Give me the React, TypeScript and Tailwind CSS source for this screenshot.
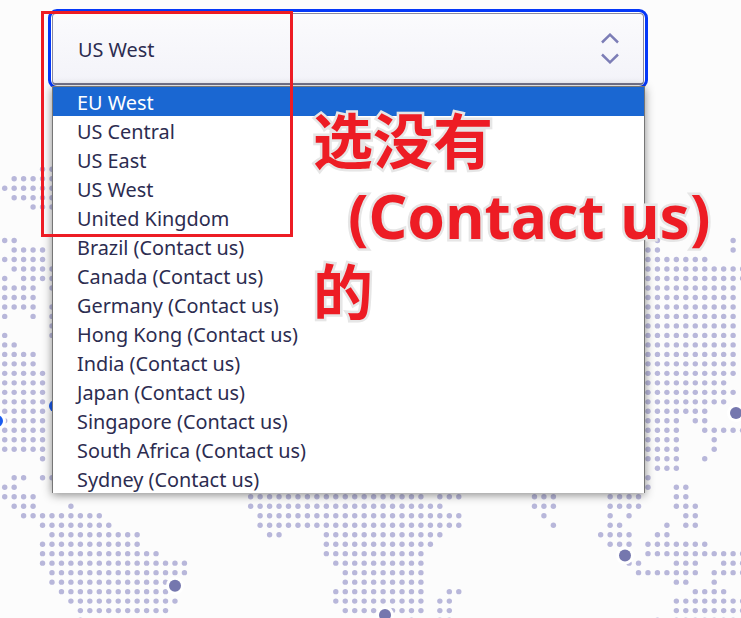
const regions = [
  'EU West',
  'US Central',
  'US East',
  'US West',
  'United Kingdom',
  'Brazil (Contact us)',
  'Canada (Contact us)',
  'Germany (Contact us)',
  'Hong Kong (Contact us)',
  'India (Contact us)',
  'Japan (Contact us)',
  'Singapore (Contact us)',
  'South Africa (Contact us)',
  'Sydney (Contact us)',
];

// dot map: row -> column ranges, only the part that shows around the dropdown
const topRows: Record<number, string> = {
  169.3: '4-5',
  178.7: '1-5',
  188.3: '0-5',
  197.7: '1-5',
  207: '3-5',
};

const mapRows: string[] = [
  '0-1 69 77',
  '1-4 68-69 77',
  '0-4 68-74',
  '1-5 68-78',
  '0 2-5 68-78',
  '0-3 5 68-77',
  '0-3 68-77',
  '0-3 5 68-77',
  '0 3 5 68-77',
  '5 68-77',
  '0 5 68-77',
  '0-1 68-77',
  '0-3 68-77',
  '0-3 68-77',
  '0-4 68-77',
  '0-4 68-76',
  '0-4 68-77',
  '0-4 68-76',
  '0-4 68-74',
  '0-4 68-71 73-74',
  '0-4 68-71 74-78',
  '0-4 68-71 75',
  '0-4 68-71 75',
  '4 68-71 74',
  '69-71',
  '1-2 4-5 68',
  '0-1 68 71-72',
  '0-3 26-44 46-48 56-58 64-67 71-72',
  '1-3 7 26-46 56-58 64-67 71-73',
  '2-10 27-48 57 64 66 72-73',
  '4-11 27-48 58 64-65 70 72-73',
  '5-14 28-29 34-46 63-66 69-70',
  '4-14 34-45 64-66 68-74',
  '4-16 34-44 68-78',
  '4-19 35-44 66-67 71-73 76-78',
  '5-19 36-44 67-73 75-78',
  '5-17 36-44 71-72 75',
  '6-17 35-44 47-48 73-76',
  '7-18 35-44 46-47 71-78',
  '8-17 36-44 46-47 71-78',
  '8 43 46-47 69 71-78',
];

function expand(spec: string) {
  const cols: number[] = [];
  spec.split(' ').forEach((part) => {
    const [a, b] = part.split('-').map(Number);
    for (let k = a; k <= (b ?? a); k++) cols.push(k);
  });
  return cols;
}

const colX = (k: number) => 4.7 + k * 9.46;

const dots: { x: number; y: number }[] = [];
Object.entries(topRows).forEach(([y, spec]) => {
  expand(spec).forEach((k) => dots.push({ x: colX(k), y: Number(y) }));
});
mapRows.forEach((spec, r) => {
  expand(spec).forEach((k) => dots.push({ x: colX(k), y: 240.5 + r * 9.49 }));
});

const pins = [
  { x: 175, y: 585.7, fill: '#7577ae' },
  { x: 625, y: 555.5, fill: '#7577ae' },
  { x: 385, y: 615, fill: '#7577ae' },
  { x: 736, y: 413, fill: '#7577ae' },
  { x: 638, y: 466, fill: '#7577ae' },
  { x: 55, y: 406, fill: '#1a5cf0' },
  { x: -3, y: 421, fill: '#1a5cf0' },
];

function WorldMap() {
  return (
    <svg className="absolute inset-0" width="741" height="618" viewBox="0 0 741 618">
      {dots.map((d, i) => (
        <circle key={i} cx={d.x} cy={d.y} r="2.7" fill="#b8b7da" />
      ))}
      {pins.map((p, i) => (
        <g key={i}>
          <circle cx={p.x} cy={p.y} r="9" fill="#ffffff" />
          <circle cx={p.x} cy={p.y} r="6" fill={p.fill} />
        </g>
      ))}
    </svg>
  );
}

function Chevrons() {
  return (
    <svg width="18" height="31" viewBox="0 0 18 31" fill="none" stroke="#7c7db6" strokeWidth="2.5">
      <path d="M1 9.5 L9 1.7 L17 9.5" />
      <path d="M1 21.5 L9 29.3 L17 21.5" />
    </svg>
  );
}

export default function App() {
  return (
    <div className="relative h-[618px] w-[741px] overflow-hidden bg-[#fcfcfc] font-['Noto_Sans',sans-serif] text-[19.85px] text-[#2c2c50]">
      <WorldMap />

      <div className="relative ml-[48px] mt-[9px] w-[600px]">
        <div className="rounded-[9px] border-[3px] border-[#0538f8] bg-white p-px">
          <div className="flex h-[72px] items-center justify-between rounded-[4px] border border-b-2 border-[#8a8aa0] border-b-[#77778f] bg-gradient-to-b from-[#fbfbfd] to-[#f3f3f9] pl-[25px] pr-[24px]">
            <span className="pt-[3px]">US West</span>
            <Chevrons />
          </div>
        </div>

        <ul className="absolute left-[4px] top-[77px] w-[593px] border-x border-t border-[#767676] bg-white shadow-[0_2px_9px_rgba(0,0,0,0.45)]">
          {regions.map((name, i) => (
            <li
              key={name}
              className={
                i === 0
                  ? 'h-[29px] bg-[#1a67d2] pl-[24px] leading-[31px] text-white'
                  : 'h-[29px] pl-[24px] leading-[31px]'
              }
            >
              {name}
            </li>
          ))}
        </ul>
      </div>

      {/* red note drawn over the screenshot */}
      <div className="absolute left-[41px] top-[11px] h-[226px] w-[252px] border-[3px] border-[#ed1c24]" />
      <div className="absolute left-[313px] top-[105px] font-['Noto_Sans','Noto_Sans_CJK_SC',sans-serif] text-[60px] font-bold leading-[77px] text-[#ed1c24] [-webkit-text-stroke:5px_#e6e6e6] [paint-order:stroke]">
        <p className="leading-[72px]">选没有</p>
        <p className="pl-[35px] text-[60.5px]">(Contact us)</p>
        <p>的</p>
      </div>
    </div>
  );
}
